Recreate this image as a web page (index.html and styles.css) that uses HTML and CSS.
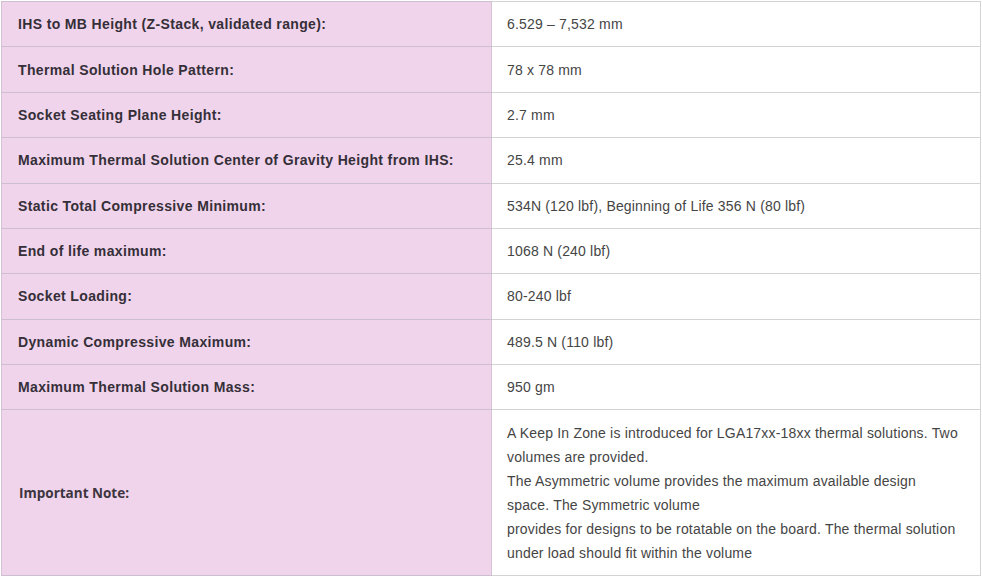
FILE: index.html
```html
<!DOCTYPE html>
<html>
<head>
<meta charset="utf-8">
<link rel="stylesheet" href="styles.css">
</head>
<body>
<table class="spec">
  <tr><th>IHS to MB Height (Z-Stack, validated range):</th><td>6.529 – 7,532 mm</td></tr>
  <tr><th>Thermal Solution Hole Pattern:</th><td>78 x 78 mm</td></tr>
  <tr><th>Socket Seating Plane Height:</th><td>2.7 mm</td></tr>
  <tr><th>Maximum Thermal Solution Center of Gravity Height from IHS:</th><td>25.4 mm</td></tr>
  <tr><th>Static Total Compressive Minimum:</th><td>534N (120 lbf), Beginning of Life 356 N (80 lbf)</td></tr>
  <tr><th>End of life maximum:</th><td>1068 N (240 lbf)</td></tr>
  <tr><th>Socket Loading:</th><td>80-240 lbf</td></tr>
  <tr><th>Dynamic Compressive Maximum:</th><td>489.5 N (110 lbf)</td></tr>
  <tr><th>Maximum Thermal Solution Mass:</th><td>950 gm</td></tr>
  <tr><th class="alt">Important Note:</th><td class="note">A Keep In Zone is introduced for LGA17xx-18xx thermal solutions. Two volumes are provided.<br>The Asymmetric volume provides the maximum available design space. The Symmetric volume<br>provides for designs to be rotatable on the board. The thermal solution under load should fit within the volume</td></tr>
</table>
</body>
</html>
```
FILE: styles.css
```css
html, body {
  margin: 0;
  padding: 0;
  background: #ffffff;
}
.spec {
  margin: 1px 0 0 1px;
  width: 980px;
  border-collapse: collapse;
  font-family: "Liberation Sans", Arial, sans-serif;
  font-size: 14px;
  line-height: 24px;
  table-layout: fixed;
}
.spec th, .spec td {
  border: 1px solid #d3d3d3;
  padding: 10.2px 15px 10.2px 16px;
  vertical-align: middle;
  text-align: left;
}
.spec th {
  width: 458px;
  background: #f0d4ec;
  color: #352f38;
  font-weight: bold;
  letter-spacing: 0.36px;
  border-color: #cdbfd0 #d3c3d3;
}
.spec th.alt {
  font-family: "Open Sans", sans-serif;
  font-size: 13.5px;
  font-weight: 700;
  letter-spacing: 0;
  color: #3d3540;
  padding-left: 17px;
}
.spec td {
  color: #454545;
  letter-spacing: 0.18px;
  padding-left: 15px;
  padding-right: 20px;
}
```
